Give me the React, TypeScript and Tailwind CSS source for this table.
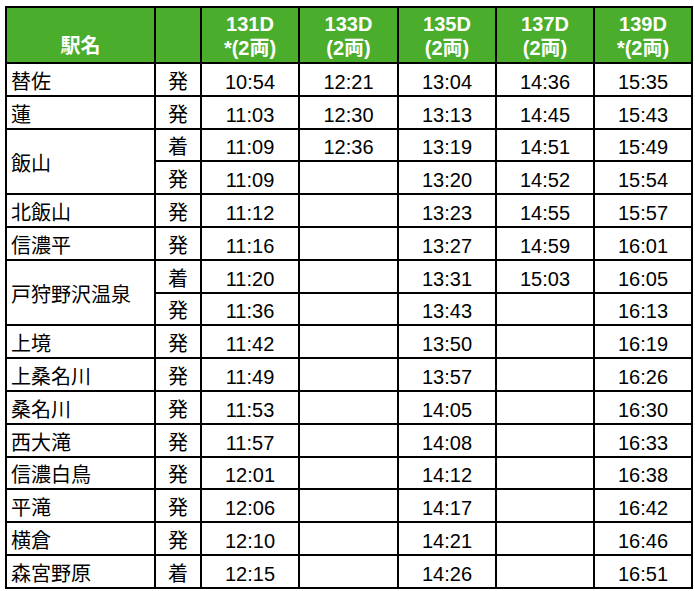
type Row = {
  name?: string;
  span?: number;
  kind: string;
  times: string[];
};

const HEADERS = [
  { no: "131D", cars: "*(2両)" },
  { no: "133D", cars: "(2両)" },
  { no: "135D", cars: "(2両)" },
  { no: "137D", cars: "(2両)" },
  { no: "139D", cars: "*(2両)" },
];

const ROWS: Row[] = [
  { name: "替佐", kind: "発", times: ["10:54", "12:21", "13:04", "14:36", "15:35"] },
  { name: "蓮", kind: "発", times: ["11:03", "12:30", "13:13", "14:45", "15:43"] },
  { name: "飯山", span: 2, kind: "着", times: ["11:09", "12:36", "13:19", "14:51", "15:49"] },
  { kind: "発", times: ["11:09", "", "13:20", "14:52", "15:54"] },
  { name: "北飯山", kind: "発", times: ["11:12", "", "13:23", "14:55", "15:57"] },
  { name: "信濃平", kind: "発", times: ["11:16", "", "13:27", "14:59", "16:01"] },
  { name: "戸狩野沢温泉", span: 2, kind: "着", times: ["11:20", "", "13:31", "15:03", "16:05"] },
  { kind: "発", times: ["11:36", "", "13:43", "", "16:13"] },
  { name: "上境", kind: "発", times: ["11:42", "", "13:50", "", "16:19"] },
  { name: "上桑名川", kind: "発", times: ["11:49", "", "13:57", "", "16:26"] },
  { name: "桑名川", kind: "発", times: ["11:53", "", "14:05", "", "16:30"] },
  { name: "西大滝", kind: "発", times: ["11:57", "", "14:08", "", "16:33"] },
  { name: "信濃白鳥", kind: "発", times: ["12:01", "", "14:12", "", "16:38"] },
  { name: "平滝", kind: "発", times: ["12:06", "", "14:17", "", "16:42"] },
  { name: "横倉", kind: "発", times: ["12:10", "", "14:21", "", "16:46"] },
  { name: "森宮野原", kind: "着", times: ["12:15", "", "14:26", "", "16:51"] },
];

export default function App() {
  return (
    <div className="w-[695px] h-[591px] bg-white pl-[5px] pt-[6px] font-['Liberation_Sans','Noto_Sans_CJK_JP',sans-serif] text-black">
      <table className="table-fixed border-collapse w-[686px] text-[20px] leading-[24px]">
        <colgroup>
          <col className="w-[149px]" />
          <col className="w-[46px]" />
          <col className="w-[98px]" />
          <col className="w-[99px]" />
          <col className="w-[98px]" />
          <col className="w-[98px]" />
          <col className="w-[98px]" />
        </colgroup>
        <thead>
          <tr className="h-[56px] bg-[#4aad2b] text-white font-bold">
            <th className="border-2 border-black align-bottom pb-[4px] text-center">駅名</th>
            <th className="border-2 border-black"></th>
            {HEADERS.map((h) => (
              <th key={h.no} className="border-2 border-black text-center align-middle pt-[1px]">
                <div>{h.no}</div>
                <div>{h.cars}</div>
              </th>
            ))}
          </tr>
        </thead>
        <tbody>
          {ROWS.map((r, i) => (
            <tr key={i} className="h-[32.8px]">
              {r.name && (
                <td
                  rowSpan={r.span ?? 1}
                  className="border-2 border-black pl-[4px] pt-[5px] align-middle whitespace-nowrap"
                >
                  {r.name}
                </td>
              )}
              <td className="border-2 border-black text-center pt-[5px]">{r.kind}</td>
              {r.times.map((t, j) => (
                <td key={j} className="border-2 border-black text-center pt-[5px]">
                  {t}
                </td>
              ))}
            </tr>
          ))}
        </tbody>
      </table>
    </div>
  );
}
